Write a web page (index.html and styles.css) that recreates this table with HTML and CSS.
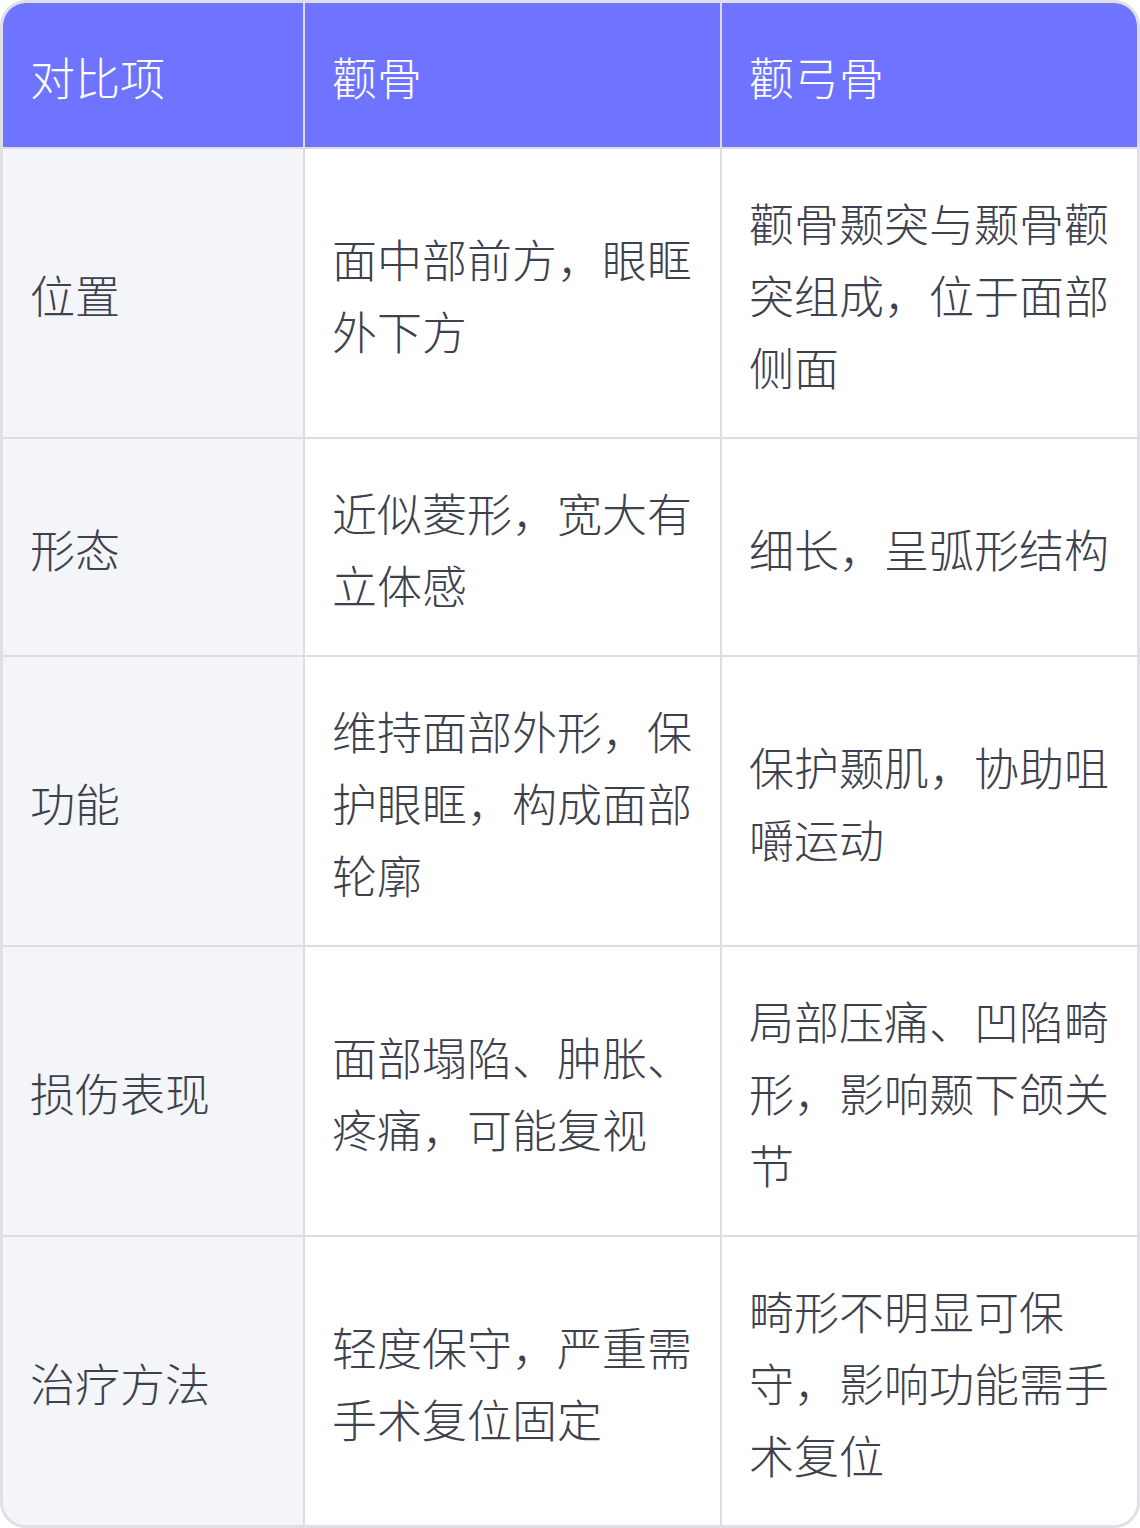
FILE: index.html
```html
<!DOCTYPE html>
<html lang="zh-CN">
<head>
<meta charset="utf-8">
<link rel="stylesheet" href="styles.css">
</head>
<body>
<div class="wrap">
<table class="cmp">
<colgroup><col class="c1"><col class="c2"><col class="c3"></colgroup>
<thead>
<tr><th>对比项</th><th>颧骨</th><th>颧弓骨</th></tr>
</thead>
<tbody>
<tr><td>位置</td><td>面中部前方，眼眶外下方</td><td>颧骨颞突与颞骨颧突组成，位于面部侧面</td></tr>
<tr><td>形态</td><td>近似菱形，宽大有立体感</td><td>细长，呈弧形结构</td></tr>
<tr><td>功能</td><td>维持面部外形，保护眼眶，构成面部轮廓</td><td>保护颞肌，协助咀嚼运动</td></tr>
<tr><td>损伤表现</td><td>面部塌陷、肿胀、疼痛，可能复视</td><td>局部压痛、凹陷畸形，影响颞下颌关节</td></tr>
<tr><td>治疗方法</td><td>轻度保守，严重需手术复位固定</td><td>畸形不明显可保守，影响功能需手术复位</td></tr>
</tbody>
</table>
</div>
</body>
</html>
```
FILE: styles.css
```css
html, body {
  margin: 0;
  padding: 0;
  background: #ffffff;
}
body {
  font-family: "Noto Sans CJK SC", "Noto Sans", sans-serif;
}
.wrap {
  width: 1140px;
  box-sizing: border-box;
  border: 3px solid #dfdfe4;
  border-radius: 26px;
  overflow: hidden;
}
.cmp {
  width: 100%;
  border-collapse: separate;
  border-spacing: 0;
  table-layout: fixed;
}
.c1 { width: 302px; }
.c2 { width: 417px; }
.c3 { width: auto; }
.cmp th, .cmp td {
  font-size: 45px;
  line-height: 72px;
  font-weight: 300;
  text-align: left;
  vertical-align: middle;
  padding: 38px 20px 34px 27px;
  border-right: 2px solid #dcdce2;
  border-bottom: 2px solid #dcdce2;
  word-break: break-all;
}
.cmp th:last-child, .cmp td:last-child { border-right: none; }
.cmp tbody tr:last-child td { border-bottom: none; }
.cmp th {
  background: #6e74ff;
  color: #ffffff;
}
.cmp td {
  color: #3d414d;
  background: #ffffff;
}
.cmp td:first-child {
  background: #f4f5f9;
}
```
